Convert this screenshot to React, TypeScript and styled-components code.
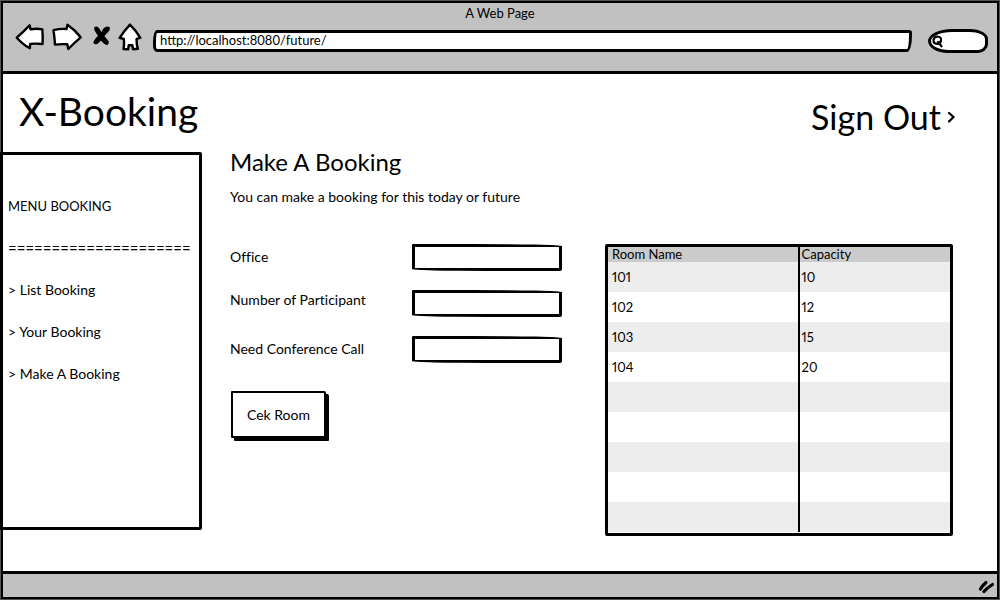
import React from "react";
import styled, { createGlobalStyle } from "styled-components";

const GlobalStyle = createGlobalStyle`
  *, *::before, *::after { box-sizing: border-box; }
  body { margin: 0; background: #fff; color: #000; font-variant-ligatures: none; font-variant-numeric: proportional-nums; }
  body, button, input { font-family: Lato, "Open Sans", sans-serif; font-size: 14px; line-height: 20px; }
  h1, h2, p, ul { margin: 0; padding: 0; font-weight: 400; }
`;

const Shell = styled.div`
  min-height: 100vh;
  padding: 1px;
  display: flex;
`;

const Frame = styled.div`
  flex: 1;
  display: flex;
  flex-direction: column;
  border: 2px solid #000;
  box-shadow: 0 0 0 1px #555;
`;

const Chrome = styled.header`
  background: #c1c1c1;
  border-bottom: 3px solid #000;
  padding-bottom: 12px;
`;

const WindowTitle = styled.div`
  text-align: center;
  font-size: 13px;
`;

const Toolbar = styled.div`
  display: flex;
  align-items: center;
  padding: 0 9px 0 12px;
  gap: 16px;
`;

const Nav = styled.nav`
  display: flex;
  gap: 6px;
  margin-right: -6px;
`;

const IconButton = styled.button`
  display: block;
  padding: 0;
  border: 0;
  background: none;
  svg { display: block; }
`;

const Address = styled.input`
  flex: 1;
  min-width: 0;
  height: 22px;
  padding: 0 4px 2px;
  border: 3px solid #000;
  border-radius: 4px 3px 5px 4px / 12px 3px 16px 6px;
  background: #fff;
  font-size: 13px;
  line-height: 14px;
  outline: none;
`;

const Search = styled.label`
  display: flex;
  align-items: center;
  width: 60px;
  height: 24px;
  padding-left: 1px;
  border: 3px solid #000;
  border-radius: 24px 18px 10px 20px / 12px 10px 9px 12px;
  background: #fff;
  svg { flex: none; }
  input { width: 100%; min-width: 0; height: 14px; padding: 0; border: 0; background: none; outline: none; }
`;

const Masthead = styled.div`
  display: flex;
  justify-content: space-between;
  align-items: center;
  height: 78px;
  padding: 0 40px 4px 16px;
`;

const Brand = styled.h1`
  font-size: 39px;
  line-height: 48px;
`;

const SignOut = styled.a`
  display: flex;
  align-items: center;
  gap: 6px;
  padding-top: 12px;
  color: #000;
  font-size: 34px;
  line-height: 40px;
  text-decoration: none;
`;

const Body = styled.div`
  flex: 1;
  display: flex;
  align-items: flex-start;
  padding-bottom: 32px;
`;

const Sidebar = styled.aside`
  flex: none;
  width: 202px;
  min-height: 378px;
  margin-left: -3px;
  padding: 41px 5px;
  border: 3px solid #000;
  border-radius: 0 2px 2px 0;
`;

const Menu = styled.ul`
  list-style: none;
  display: grid;
  gap: 22px;
`;

const MenuTitle = styled.li`
  font-size: 13px;
`;

const Rule = styled.li`
  font-size: 15px;
  white-space: nowrap;
  overflow: hidden;
`;

const MenuLink = styled.a`
  color: #000;
  text-decoration: none;
`;

const Main = styled.main`
  flex: 1;
  min-width: 0;
  padding: 0 44px 0 28px;
`;

const Heading = styled.h2`
  font-size: 24px;
  line-height: 20px;
`;

const Lead = styled.p`
  padding-top: 15px;
`;

const Columns = styled.div`
  display: grid;
  grid-template-columns: minmax(0, 375fr) minmax(0, 348fr);
  align-items: start;
  padding-top: 37px;
`;

const Form = styled.form`
  display: grid;
  gap: 19px;
`;

const Field = styled.div<{ $align?: string }>`
  display: grid;
  grid-template-columns: 182px 150px;
  align-items: ${(p) => p.$align ?? "center"};
  label { padding-bottom: 2px; }
`;

const TextBox = styled.input`
  width: 100%;
  height: 27px;
  padding: 0 6px;
  border: 3px solid #000;
  border-radius: 1px 60% 2px 50% / 1px 2px 2px 2px;
  background: #fff;
  outline: none;
`;

const CheckButton = styled.button`
  justify-self: start;
  height: 47px;
  margin: 9px 0 0 1px;
  padding: 0 14px;
  border: 2px solid #000;
  border-radius: 1px 2px 1px 1px;
  background: #fff;
  box-shadow: 3px 3px 0 #000;
  color: #000;
`;

const Rooms = styled.table`
  width: 100%;
  border: 3px solid #000;
  border-radius: 2px;
  border-spacing: 0;
  table-layout: fixed;
  padding-bottom: 1px;
  font-size: 13px;
  th, td { padding: 0 4px; text-align: left; font-weight: 400; }
  th + th, td + td { padding-left: 2px; }
  th:first-child, td:first-child { border-right: 2px solid #000; }
  th:first-child { width: 56%; }
  th { height: 15px; line-height: 15px; background: #cbcbcb; }
  td { height: 30px; }
  tbody tr:nth-child(odd) td { background: #ededed; }
`;

const StatusBar = styled.footer`
  display: flex;
  justify-content: flex-end;
  align-items: center;
  height: 26px;
  padding-right: 1px;
  border-top: 3px solid #000;
  background: #c1c1c1;
`;

const stroke = {
  fill: "#fff",
  stroke: "#000",
  strokeWidth: 2.4,
  strokeLinejoin: "round" as const,
  strokeLinecap: "round" as const,
};

const rooms: [string, string][] = [
  ["101", "10"],
  ["102", "12"],
  ["103", "15"],
  ["104", "20"],
  ["", ""],
  ["", ""],
  ["", ""],
  ["", ""],
  ["", ""],
];

const menu = ["List Booking", "Your Booking", "Make A Booking"];

export default function App() {
  return (
    <Shell>
      <GlobalStyle />
      <Frame>
        <Chrome>
          <WindowTitle>A Web Page</WindowTitle>
          <Toolbar>
            <Nav aria-label="Browser">
              <IconButton type="button" aria-label="Back">
                <svg width="30" height="36" viewBox="0 0 30 36" {...stroke}>
                  <path d="M1.8 14.7Q8 9 14.6 2.3L15.6 6.4Q22 5.2 27.3 6.4Q28 13 27.6 21Q21 20.4 15.2 20.9L14.8 25.2Q8.5 22 1.8 14.7Z" />
                </svg>
              </IconButton>
              <IconButton type="button" aria-label="Forward">
                <svg width="32" height="36" viewBox="0 0 32 36" {...stroke}>
                  <path d="M2.5 7.2Q9 5.5 15.5 6L16.5 1.8Q24 7 29.7 14.3Q23 20 17.3 26L16.3 21.3Q10 20.8 4 21.6Q3.5 14 2.5 7.2Z" />
                </svg>
              </IconButton>
              <IconButton type="button" aria-label="Stop">
                <svg width="22" height="36" viewBox="0 0 22 36" fill="#000">
                  <path d="M5.3 4Q8.5 2.5 10.6 6L12.4 9Q14.5 4 18.5 3.6Q22 3.8 20.4 7.5Q18 10.5 15.4 13Q17.5 15.5 19.6 18.2Q20.5 21.5 17.2 22Q14 20.8 12 17.6Q10 20 8 21Q5 22 4.2 19.5Q5.5 16 9 12.8Q6.5 9.5 5.2 6.5Z" />
                </svg>
              </IconButton>
              <IconButton type="button" aria-label="Home">
                <svg width="26" height="36" viewBox="0 0 26 36" {...stroke}>
                  <path d="M13 1.6Q19 7.5 23.3 14.8L19.6 15.8Q19.4 21 20.8 25.8L16 26.2L15.3 22.3L11.7 22.3L11.2 26.4L6.5 26Q7.4 21 6.8 16L2.6 14.8Q7 8 13 1.6Z" />
                </svg>
              </IconButton>
            </Nav>
            <Address aria-label="Address" defaultValue="http://localhost:8080/future/" />
            <Search>
              <svg width="12" height="14" viewBox="0 0 12 14" fill="none" stroke="#000" strokeWidth="2.2" strokeLinecap="round">
                <path d="M9 6.5Q8.5 9.8 5.2 9.8Q1.3 9.5 1.5 6.2Q2 2.6 5.5 2.5Q9.5 2.8 9 6.5ZM6 8L9.5 12.3" />
              </svg>
              <input aria-label="Search" />
            </Search>
          </Toolbar>
        </Chrome>

        <Masthead>
          <Brand>X-Booking</Brand>
          <SignOut href="#sign-out">
            Sign Out
            <svg width="10" height="14" viewBox="0 0 10 14" fill="none" stroke="#000" strokeWidth="2.2" strokeLinecap="round">
              <path d="M2 3L6.5 7L2 11.5" />
            </svg>
          </SignOut>
        </Masthead>

        <Body>
          <Sidebar>
            <Menu>
              <MenuTitle>MENU BOOKING</MenuTitle>
              <Rule>=====================</Rule>
              {menu.map((item) => (
                <li key={item}>
                  <MenuLink href="#menu">&gt; {item}</MenuLink>
                </li>
              ))}
            </Menu>
          </Sidebar>
          <Main>
            <Heading>Make A Booking</Heading>
            <Lead>You can make a booking for this today or future</Lead>
            <Columns>
              <Form onSubmit={(e) => e.preventDefault()}>
                <Field>
                  <label htmlFor="office">Office</label>
                  <TextBox id="office" />
                </Field>
                <Field $align="start">
                  <label htmlFor="participants">Number of Participant</label>
                  <TextBox id="participants" />
                </Field>
                <Field>
                  <label htmlFor="conference">Need Conference Call</label>
                  <TextBox id="conference" />
                </Field>
                <CheckButton type="submit">Cek Room</CheckButton>
              </Form>
              <Rooms>
                <thead>
                  <tr>
                    <th scope="col">Room Name</th>
                    <th scope="col">Capacity</th>
                  </tr>
                </thead>
                <tbody>
                  {rooms.map(([name, capacity], i) => (
                    <tr key={i}>
                      <td>{name}</td>
                      <td>{capacity}</td>
                    </tr>
                  ))}
                </tbody>
              </Rooms>
            </Columns>
          </Main>
        </Body>

        <StatusBar>
          <svg width="20" height="16" viewBox="0 0 20 16" fill="none" stroke="#000" strokeWidth="3.2" strokeLinecap="round">
            <path d="M4.5 11Q6.5 7.5 10 4.5M8 13.5Q11.5 9.5 16.5 6.5" />
          </svg>
        </StatusBar>
      </Frame>
    </Shell>
  );
}
